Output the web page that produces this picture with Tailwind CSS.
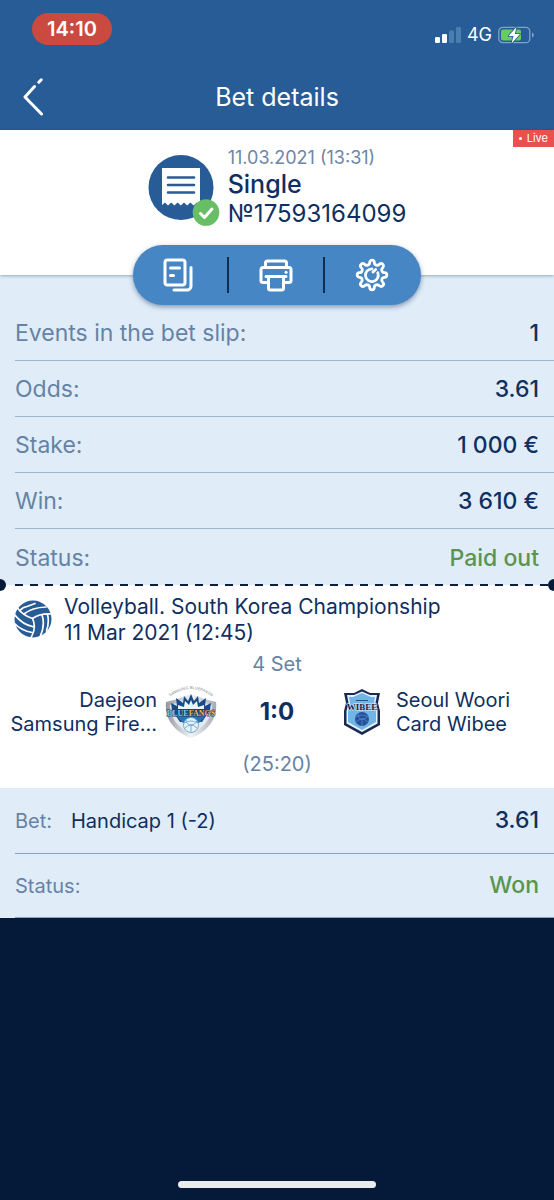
<!DOCTYPE html>
<html lang="en">
<head>
    <meta charset="UTF-8">
    <meta name="viewport" content="width=device-width, initial-scale=1.0">
    <title>Bet details</title>
    <script src="https://cdn.jsdelivr.net/npm/@tailwindcss/browser@4"></script>
</head>
<body class="bg-[#041a38] text-[#0f2f61] font-['Inter','Liberation_Sans',sans-serif] min-h-screen flex flex-col">

    <!-- Header -->
    <header class="bg-[#275c96] text-white">
        <div class="flex items-center justify-between h-14 pl-8 pr-5 pt-px">
            <span class="bg-[#cb4a3f] rounded-full h-8 w-20 flex items-center justify-center text-xl font-semibold">14:10</span>
            <div class="flex items-center gap-[6px] pt-3">
                <svg class="w-[26px] h-4" viewBox="0 0 26 16" fill="#fff" aria-hidden="true">
                    <rect x="0" y="10" width="5" height="6" rx="1.2"/>
                    <rect x="7" y="7" width="5" height="9" rx="1.2"/>
                    <rect x="14" y="3.500" width="5" height="12.500" rx="1.200" fill="#487fae"/>
                    <rect x="21" y="0" width="5" height="16" rx="1.200" fill="#487fae"/>
                </svg>
                <span class="text-lg leading-6">4G</span>
                <svg class="w-9 h-[18px]" viewBox="0 0 36 18" aria-hidden="true">
                    <rect x=".8" y="1.300" width="31" height="15.400" rx="4" fill="none" stroke="#7fa3c8" stroke-width="1.300"/>
                    <path d="M34 6.500c2.400.8 2.400 4.200 0 5z" fill="#7fa3c8"/>
                    <rect x="3" y="3.500" width="20" height="11" rx="2" fill="#68cd60"/>
                    <path d="M18.500 1 10.500 10h5l-2 7.500L22 8h-5.200z" fill="#fff" stroke="#275c96" stroke-width="1.600" paint-order="stroke" stroke-linejoin="round"/>
                </svg>
            </div>
        </div>
        <div class="grid grid-cols-[1fr_auto_1fr] items-center h-[74px] px-4 pt-2">
            <button type="button" aria-label="Back" class="w-10 h-12 flex items-center pl-[7px]">
                <svg class="w-5 h-[38px]" viewBox="0 0 20 38" fill="none" stroke="#fff" stroke-width="3" stroke-linecap="round" stroke-linejoin="round">
                    <path d="M18.500 36 2 19 11.500 8.500M15.800 4.200 18.200 1.800"/>
                </svg>
            </button>
            <h1 class="text-[25px] leading-8">Bet details</h1>
        </div>
    </header>

    <main>
        <!-- Bet summary -->
        <section class="relative bg-white h-[145px] flex justify-center gap-2 pt-4 shadow-[0_1px_3px_rgba(15,47,97,0.35)]">
            <span class="absolute top-0 right-0 bg-[#e9504e] text-white text-[11px] leading-[17px] px-[6px] flex items-center gap-[5px]"><i class="size-[3px] rounded-full bg-white"></i>Live</span>
            <svg class="w-[72px] h-[72px] mt-2" viewBox="0 0 72 72" fill="none" aria-hidden="true">
                <circle cx="33" cy="33.500" r="32.500" fill="#275c96"/>
                <path d="M14 14h38v37l-3.200-2.500-3.200 3-3.200-3-3.200 3-3.200-3-3.200 3-3.200-3-3.200 3-3.200-3-3.200 3-3-3L14 51z" fill="#fff"/>
                <path d="M20 23.500h26M20 31h26M20 38.500h26" stroke="#275c96" stroke-width="2.600" stroke-linecap="round"/>
                <circle cx="58" cy="58.500" r="13.300" fill="#67be65"/>
                <path d="m52.500 59.500 4 4 7.500-8.500" stroke="#fff" stroke-width="3" stroke-linecap="round" stroke-linejoin="round"/>
            </svg>
            <div>
                <p class="text-[18px] leading-6 text-[#6d86a6]">11.03.2021 (13:31)</p>
                <h2 class="text-[25px] leading-7 font-medium">Single</h2>
                <p class="text-2xl leading-8">№17593164099</p>
            </div>

            <!-- Actions -->
            <div class="absolute -bottom-[30px] left-1/2 -translate-x-1/2 w-72 h-[60px] rounded-full bg-[#4686c4] shadow-[0_2px_5px_rgba(15,47,97,0.45)] grid grid-cols-3 items-center divide-x-2 divide-[#0f2c52]">
                <button type="button" aria-label="Copy bet slip" class="h-9 flex items-center justify-center pr-1">
                    <svg class="size-9" viewBox="0 0 36 36" fill="none" stroke="#fff" stroke-width="3" stroke-linecap="round" stroke-linejoin="round">
                        <rect x="5" y="3" width="20" height="25" rx="2.500"/>
                        <path d="M10.500 11h9M10.500 18.500h3M31 10.500V29a4 4 0 0 1-4 4H14"/>
                    </svg>
                </button>
                <button type="button" aria-label="Print" class="h-9 flex items-center justify-center">
                    <svg class="size-9" viewBox="0 0 36 36" fill="none" stroke="#fff" stroke-width="3" stroke-linecap="round" stroke-linejoin="round">
                        <path d="M7.500 10V6a2 2 0 0 1 2-2h17a2 2 0 0 1 2 2v4"/>
                        <path d="M9.500 25.500H5a2 2 0 0 1-2-2V12.500a2 2 0 0 1 2-2h26a2 2 0 0 1 2 2v11a2 2 0 0 1-2 2h-4.500"/>
                        <path d="M8 19.500h20M10.500 19.500h15V31a2 2 0 0 1-2 2h-11a2 2 0 0 1-2-2z"/>
                        <path d="M28 15.200h.1"/>
                    </svg>
                </button>
                <button type="button" aria-label="Settings" class="h-9 flex items-center justify-center pr-[2px]">
                    <svg class="size-9" viewBox="0 0 36 36" fill="none" stroke="#fff" stroke-width="2.800" stroke-linecap="round" stroke-linejoin="round">
                        <path d="M15.700 5.500a2.300 2.300 0 0 1 4.600 0q0 2 1.900 2.600t3.300-.9a2.300 2.300 0 0 1 3.300 3.300q-1.500 1.400-.9 3.300t2.600 1.900a2.300 2.300 0 0 1 0 4.600q-2 0-2.600 1.900t.9 3.300a2.300 2.300 0 0 1-3.300 3.300q-1.400-1.500-3.300-.9t-1.900 2.600a2.300 2.300 0 0 1-4.600 0q0-2-1.900-2.600t-3.300.9a2.300 2.300 0 0 1-3.300-3.300q1.500-1.400.9-3.300t-2.600-1.900a2.300 2.300 0 0 1 0-4.600q2 0 2.600-1.900t-.9-3.300a2.300 2.300 0 0 1 3.300-3.300q1.400 1.500 3.300.9t1.900-2.600z"/>
                        <path d="M23.800 15.800A6.400 6.400 0 1 1 18 11.800M19 15l2.700-2.500"/>
                    </svg>
                </button>
            </div>
        </section>

        <dl class="bg-[#e0edf8] pt-[30px] pl-[15px] text-[23px]">
            <div class="flex items-center justify-between h-14 pt-[2px] pr-[15px] border-b border-[#9fb6ce]">
                <dt class="text-[#6583a6]">Events in the bet slip:</dt>
                <dd class="font-medium">1</dd>
            </div>
            <div class="flex items-center justify-between h-14 pt-[2px] pr-[15px] border-b border-[#9fb6ce]">
                <dt class="text-[#6583a6]">Odds:</dt>
                <dd class="font-medium">3.61</dd>
            </div>
            <div class="flex items-center justify-between h-14 pt-[2px] pr-[15px] border-b border-[#9fb6ce]">
                <dt class="text-[#6583a6]">Stake:</dt>
                <dd class="font-medium">1 000 €</dd>
            </div>
            <div class="flex items-center justify-between h-14 pt-[2px] pr-[15px] border-b border-[#9fb6ce]">
                <dt class="text-[#6583a6]">Win:</dt>
                <dd class="font-medium">3 610 €</dd>
            </div>
            <div class="flex items-center justify-between h-14 pt-[2px] pr-[15px]">
                <dt class="text-[#6583a6]">Status:</dt>
                <dd class="font-medium text-[#5a944e]">Paid out</dd>
            </div>
        </dl>

        <!-- Event -->
        <section class="relative bg-white pb-[6px]">
            <!-- Tear line with a notch at each end -->
            <div class="absolute -top-[6px] inset-x-0 h-3 flex items-center overflow-hidden">
                <i class="size-3 rounded-full bg-[#041a38] -ml-[6px]"></i>
                <i class="flex-1 h-[2px] ml-[9px] bg-[repeating-linear-gradient(90deg,#0c1f3f_0_8px,transparent_8px_15px)]"></i>
                <i class="size-3 rounded-full bg-[#041a38] -mr-[6px]"></i>
            </div>

            <div class="flex items-start gap-3 pt-2 pl-[14px]">
                <svg class="size-[38px] mt-[7px]" viewBox="0 0 38 38" fill="none" stroke="#fff" stroke-width="1.700" stroke-linecap="round" aria-hidden="true">
                    <circle cx="19" cy="19" r="18.500" fill="#275c96" stroke="none"/>
                    <path d="M3 7.500Q9 15.500 18.500 18.500Q26 13 38 14"/>
                    <path d="M18.500 18.500Q23 28 16.500 38.500"/>
                    <path d="M0 14Q8 24.500 20 27M0 23Q7 30.500 18 32.500"/>
                    <path d="M10 14Q18 7.500 32 7M13 6.500 21 3.500M6 10.500Q9 7 13 6.500"/>
                    <path d="M28 15Q31.500 25 26 37M33.500 14.500Q35.500 22 32.500 31"/>
                </svg>
                <div class="text-[21px] leading-[26px] pt-px">
                    <h3>Volleyball. South Korea Championship</h3>
                    <p>11 Mar 2021 (12:45)</p>
                </div>
            </div>
            <p class="text-center text-xl leading-9 text-[#6583a6]">4 Set</p>
            <div class="grid grid-cols-[1fr_104px_1fr] items-center h-[60px] text-xl leading-6">
                <div class="flex items-center justify-end gap-2 pr-2">
                    <p class="text-right">Daejeon<br>Samsung Fire...</p>
                    <svg class="w-[52px] h-[54px] shrink-0" viewBox="0 0 52 54" aria-hidden="true">
                        <defs>
                            <path id="crest-arc" d="M2 14Q26-6 50 14"/>
                            <linearGradient id="steel" x2="1">
                                <stop offset="0" stop-color="#92979e"/>
                                <stop offset=".5" stop-color="#f2f4f6"/>
                                <stop offset="1" stop-color="#a5aab1"/>
                            </linearGradient>
                        </defs>
                        <path d="M1 17Q14 14 26 9 38 14 51 17C53 34 42 47 26 53 10 47-1 34 1 17z" fill="url(#steel)"/>
                        <path d="M5 20 26 14 47 20C47 33 39 43 26 49 13 43 5 33 5 20z" fill="#e3e9ee"/>
                        <path d="m7 25-1-7 6 3-1-8 7 5 1-7 4 5 3-7 3 7 4-5 1 7 7-5-1 8 6-3-1 7-8 12H15z" fill="#174a86"/>
                        <path d="m13 24 0-4 6 2 1-6 4 4 2-5 2 5 4-4 1 6 6-2v4z" fill="#eaf7fd"/>
                        <path d="M10 29h32l-8 9H18z" fill="#2976ad"/>
                        <text x="26" y="31" text-anchor="middle" font-family="Liberation Serif, serif" font-size="8" font-weight="700" stroke="#1d3a63" stroke-width="1" paint-order="stroke"><tspan fill="#7cc8ee">BLUE</tspan><tspan fill="#f6b04a">FANGS</tspan></text>
                        <circle cx="26" cy="40" r="7.500" fill="#e6f3fb" stroke="#5f9dcc" stroke-width=".8"/>
                        <path d="M19 38q7-4 14 0M26 40v7M21 35q1 5 5 5t6-4M20 43q3-3 6-3t6 3" fill="none" stroke="#5f9dcc" stroke-width=".8"/>
                        <text font-family="Liberation Sans, sans-serif" font-size="4" fill="#7f868f" text-anchor="middle"><textPath href="#crest-arc" startOffset="50%">SAMSUNG BLUEFANGS</textPath></text>
                    </svg>
                </div>
                <p class="text-center text-2xl font-bold">1:0</p>
                <div class="flex items-center gap-4 pl-[15px]">
                    <svg class="w-9 h-[46px] shrink-0" viewBox="0 0 36 46" aria-hidden="true">
                        <path d="M18 0 26 4 36 4 34 14 36 22V36L18 46 0 36V22L2 14 0 4H10z" fill="#1b2854"/>
                        <path d="M18 2.500 26 6 33 6 31.500 14 33.500 22V34.500L18 43 2.500 34.500V22L4.500 14 3 6H10z" fill="#e6f3fc"/>
                        <path d="M18 4 27 8 31 8 30 14 32 22V33L18 41 4 33V22L6 14 5 8H9z" fill="#70b5e6"/>
                        <path d="M12 11.500h12" stroke="#28527f"/>
                        <text x="18" y="21" text-anchor="middle" font-family="Liberation Serif, serif" font-size="9" font-weight="700" fill="#17204a" stroke="#dff0fb" stroke-width="1" paint-order="stroke">WIBEE</text>
                        <circle cx="18" cy="30" r="7" fill="#27509a"/>
                        <path d="M11.500 28q6-4 13 0M18 30v7M14 24q0 6 4 6t6-3M12 33q3-3 6-3t6 3" fill="none" stroke="#5a9ad6" stroke-width=".6"/>
                    </svg>
                    <p>Seoul Woori<br>Card Wibee</p>
                </div>
            </div>
            <p class="pt-1 text-center text-xl leading-9 text-[#6583a6]">(25:20)</p>
        </section>

        <dl class="bg-[#e0edf8] pl-[15px] text-xl">
            <div class="flex items-center h-[66px] pr-[15px] border-b border-[#8ba3c0]">
                <dt class="text-[#6583a6] w-14">Bet:</dt>
                <dd class="flex-1">Handicap 1 (-2)</dd>
                <dd class="font-medium text-[23px]">3.61</dd>
            </div>
            <div class="flex items-center justify-between h-16 pr-[15px] border-b border-[#8ba3c0]">
                <dt class="text-[#6583a6]">Status:</dt>
                <dd class="font-medium text-[23px] text-[#5a944e]">Won</dd>
            </div>
        </dl>
    </main>

    <!-- Home indicator -->
    <footer class="mt-auto pb-3 flex justify-center">
        <i class="w-[198px] h-[7px] rounded-full bg-[#e9ebee]"></i>
    </footer>

</body>
</html>
